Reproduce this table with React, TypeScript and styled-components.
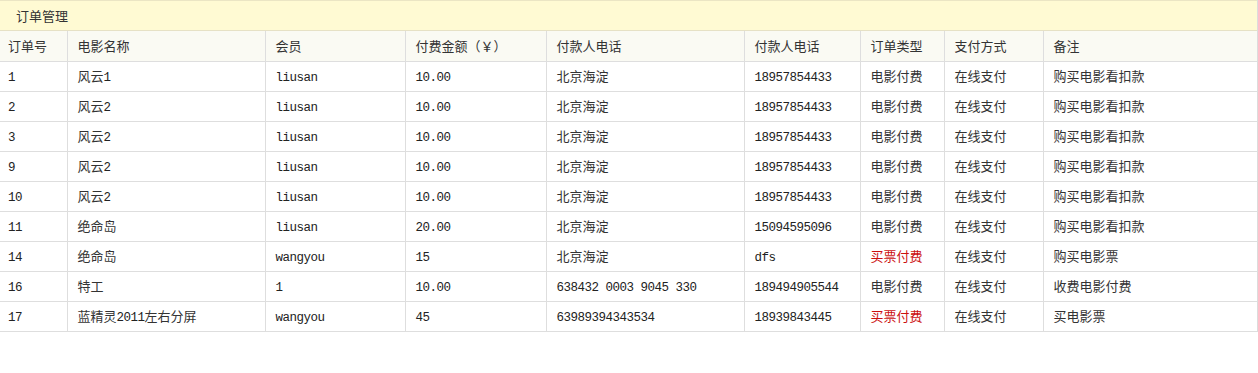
import React from "react";
import styled, { createGlobalStyle } from "styled-components";

const GlobalStyle = createGlobalStyle`
  html, body { margin: 0; padding: 0; background: #ffffff; }
  body {
    font-family: "Noto Sans CJK SC", "Liberation Sans", sans-serif;
    font-size: 13px;
    color: #333333;
  }
`;

const Panel = styled.section`
  width: 1258px;
  box-sizing: border-box;
  border-right: 1px solid #dcdcdc;
`;

const TitleBar = styled.div`
  height: 29px;
  box-sizing: content-box;
  border-top: 1px solid #ebe5c4;
  border-bottom: 1px solid #e6e1c5;
  background: #fffad3;
  display: flex;
  align-items: center;
  padding-left: 16px;
  font-size: 13px;
  color: #333333;
`;

const Table = styled.table`
  width: 100%;
  border-collapse: collapse;
  table-layout: fixed;
`;

const HeadRow = styled.tr`
  background: #fafaf3;
`;

const BodyRow = styled.tr`
  background: #ffffff;
`;

const Cell = styled.td<{ $first?: boolean; $red?: boolean }>`
  height: 30px;
  padding: 0 0 0 ${(p) => (p.$first ? "8px" : "10px")};
  box-sizing: border-box;
  border-bottom: 1px solid #dedede;
  border-left: ${(p) => (p.$first ? "none" : "1px solid #dedede")};
  font-size: 13px;
  line-height: 18px;
  color: ${(p) => (p.$red ? "#cc1010" : "#333333")};
  white-space: nowrap;
  overflow: hidden;
  text-align: left;
  vertical-align: middle;
  font-weight: normal;
`;

const HeadCell = styled(Cell).attrs({ as: "th" })``;

const Latin = styled.span`
  font-family: "Liberation Mono", "DejaVu Sans Mono", monospace;
  font-size: 12.5px;
  letter-spacing: -0.5px;
  line-height: 1;
  white-space: pre;
  color: #222222;
`;

const widths = [67, 198, 140, 141, 198, 116, 84, 99, 214];

const headers = [
  "订单号",
  "电影名称",
  "会员",
  "付费金额（￥）",
  "付款人电话",
  "付款人电话",
  "订单类型",
  "支付方式",
  "备注",
];

type Row = [string, string, string, string, string, string, string, string, string];

const rows: Row[] = [
  ["1", "风云1", "liusan", "10.00", "北京海淀", "18957854433", "电影付费", "在线支付", "购买电影看扣款"],
  ["2", "风云2", "liusan", "10.00", "北京海淀", "18957854433", "电影付费", "在线支付", "购买电影看扣款"],
  ["3", "风云2", "liusan", "10.00", "北京海淀", "18957854433", "电影付费", "在线支付", "购买电影看扣款"],
  ["9", "风云2", "liusan", "10.00", "北京海淀", "18957854433", "电影付费", "在线支付", "购买电影看扣款"],
  ["10", "风云2", "liusan", "10.00", "北京海淀", "18957854433", "电影付费", "在线支付", "购买电影看扣款"],
  ["11", "绝命岛", "liusan", "20.00", "北京海淀", "15094595096", "电影付费", "在线支付", "购买电影看扣款"],
  ["14", "绝命岛", "wangyou", "15", "北京海淀", "dfs", "买票付费", "在线支付", "购买电影票"],
  ["16", "特工", "1", "10.00", "638432 0003 9045 330", "189494905544", "电影付费", "在线支付", "收费电影付费"],
  ["17", "蓝精灵2011左右分屏", "wangyou", "45", "63989394343534", "18939843445", "买票付费", "在线支付", "买电影票"],
];

function renderText(s: string): React.ReactNode {
  const parts = s.split(/([\x20-\x7e]+)/).filter((p) => p.length > 0);
  return parts.map((p, i) =>
    /^[\x20-\x7e]+$/.test(p) ? (
      <Latin key={i}>{p}</Latin>
    ) : (
      <React.Fragment key={i}>{p}</React.Fragment>
    )
  );
}

export default function App() {
  return (
    <>
      <GlobalStyle />
      <Panel>
        <TitleBar>订单管理</TitleBar>
        <Table>
          <colgroup>
            {widths.map((w, i) => (
              <col key={i} style={{ width: w }} />
            ))}
          </colgroup>
          <thead>
            <HeadRow>
              {headers.map((h, i) => (
                <HeadCell key={i} $first={i === 0}>
                  {renderText(h)}
                </HeadCell>
              ))}
            </HeadRow>
          </thead>
          <tbody>
            {rows.map((r, ri) => (
              <BodyRow key={ri}>
                {r.map((c, ci) => (
                  <Cell key={ci} $first={ci === 0} $red={ci === 6 && c === "买票付费"}>
                    {renderText(c)}
                  </Cell>
                ))}
              </BodyRow>
            ))}
          </tbody>
        </Table>
      </Panel>
    </>
  );
}
